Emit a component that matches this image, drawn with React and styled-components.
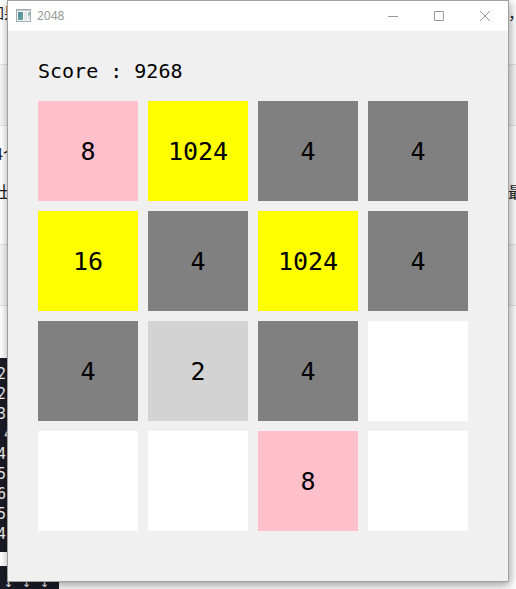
import React from "react";
import styled, { createGlobalStyle } from "styled-components";

const GlobalStyle = createGlobalStyle`
  * { box-sizing: border-box; }
  body { margin: 0; background: #fff; overflow: hidden; }
`;

const Desktop = styled.main`
  position: relative;
  height: 100vh;
  overflow: hidden;
`;

const Article = styled.div`
  display: flex;
  flex-direction: column;
  color: #222;
`;

const Paragraph = styled.div`
  height: ${(p) => p.$height}px;
  padding-top: ${(p) => p.$top || 0}px;
`;

const Line = styled.p`
  display: flex;
  justify-content: space-between;
  margin: 0 -8px 0 -12px;
  font-family: "Noto Sans CJK SC", sans-serif;
  font-size: 16px;
  line-height: ${(p) => (p.$compact ? 24 : 38)}px;
  white-space: nowrap;
`;

const Lead = styled.span`
  margin-left: ${(p) => p.$shift || 0}px;
`;

const Band = styled.div`
  height: 62px;
  background: #f6f6f6;
  border: solid #dfe2e5;
  border-width: 1px 0;
`;

const Code = styled.pre`
  width: ${(p) => p.$width};
  margin: 0 0 14px;
  padding: 6px 0 8px;
  background: #1a1b26;
  color: #f0f0f0;
  font-family: "DejaVu Sans Mono", monospace;
  font-size: 15px;
  line-height: 20px;
`;

const CodeLine = styled.div`
  margin-left: ${(p) => p.$indent}px;
`;

const Window = styled.section`
  position: absolute;
  top: 0;
  left: 7px;
  right: 7px;
  border: 1px solid #a0a0a0;
  background: #f0f0f0;
  box-shadow: 1px 3px 9px rgba(0, 0, 0, 0.4);
`;

const TitleBar = styled.header`
  display: flex;
  align-items: center;
  justify-content: space-between;
  height: 30px;
  padding-left: 8px;
  background: #fff;
`;

const Title = styled.h1`
  display: flex;
  align-items: center;
  gap: 5px;
  margin: 0;
  color: #999;
  font-family: "Noto Sans", sans-serif;
  font-size: 12px;
  font-weight: 400;
  line-height: 16px;
`;

const Controls = styled.div`
  display: flex;
`;

const ControlButton = styled.button`
  display: grid;
  place-items: center;
  width: 46px;
  height: 30px;
  padding: 0;
  border: 0;
  background: none;
  color: #999;
`;

const Client = styled.div`
  padding: 28px 40px 50px 30px;
  color: #000;
  font-family: "DejaVu Sans Mono", monospace;
`;

const Score = styled.p`
  margin: 0 0 18px;
  font-size: 20px;
  line-height: 24px;
`;

const Board = styled.div`
  display: grid;
  grid-template-columns: repeat(4, 1fr);
  gap: 10px;
`;

const tileColors = {
  0: "#ffffff",
  2: "#d3d3d3",
  4: "#808080",
  8: "#ffc0cb",
};

const Tile = styled.div`
  display: grid;
  place-items: center;
  aspect-ratio: 1;
  padding-top: 2px;
  background: ${(p) => tileColors[p.$value] || "#ffff00"};
  font-size: 25px;
  line-height: 30px;
`;

const tiles = [8, 1024, 4, 4, 16, 4, 1024, 4, 4, 2, 4, 0, 0, 0, 8, 0];
const codeLines = ["2", "2", "3", " 4", "4", "5", "6", "5", "4"];

function AppIcon() {
  return (
    <svg width="16" height="14" viewBox="0 0 16 14" aria-hidden="true">
      <defs>
        <linearGradient id="screen" x1="0" y1="0" x2="1" y2="1">
          <stop offset="0" stopColor="#5b7fb0" />
          <stop offset="1" stopColor="#62b08a" />
        </linearGradient>
      </defs>
      <rect x="0.5" y="0.5" width="14" height="12" fill="#f4f6f8" stroke="#a3abb1" />
      <path d="M1 1.5h13" stroke="#c3cdd6" />
      <rect x="2" y="3" width="5" height="8" fill="url(#screen)" />
      <rect x="8" y="3" width="3" height="8" fill="#e2e4e6" />
      <path d="M12 3h2v3l-2 2z" fill="#8fbfae" />
      <path d="M12 8l2-2v5h-2z" fill="#e2e4e6" />
    </svg>
  );
}

const controls = [
  { label: "Minimize", path: "M0 5.5h10" },
  { label: "Maximize", path: "M0.5 0.5h9v9h-9z" },
  { label: "Close", path: "M0 0l10 10M10 0L0 10" },
];

export default function App() {
  return (
    <>
      <GlobalStyle />
      <Desktop>
        <Article>
          <Paragraph $height={64}>
            <Line $compact><Lead>如果</Lead><span>，</span></Line>
          </Paragraph>
          <Band />
          <Paragraph $height={118} $top={8}>
            <Line><Lead $shift={6}>4个</Lead></Line>
            <Line><Lead $shift={8}>出</Lead><span>最</span></Line>
          </Paragraph>
          <Band />
          <Paragraph $height={52} />
          <Code $width="100px">
            {codeLines.map((text, i) => (
              <CodeLine key={i} $indent={text.startsWith(" ") ? 4 : -3}>{text.trim()}</CodeLine>
            ))}
          </Code>
          <Code $width="59px">
            <CodeLine $indent={4}>↓ ↓ ↓</CodeLine>
          </Code>
        </Article>
        <Window aria-label="2048">
          <TitleBar>
            <Title><AppIcon />2048</Title>
            <Controls>
              {controls.map(({ label, path }) => (
                <ControlButton key={label} type="button" aria-label={label}>
                  <svg width="10" height="10" viewBox="0 0 10 10" fill="none" stroke="currentColor">
                    <path d={path} />
                  </svg>
                </ControlButton>
              ))}
            </Controls>
          </TitleBar>
          <Client>
            <Score>Score : 9268</Score>
            <Board>
              {tiles.map((value, i) => (
                <Tile key={i} $value={value}>{value || ""}</Tile>
              ))}
            </Board>
          </Client>
        </Window>
      </Desktop>
    </>
  );
}
